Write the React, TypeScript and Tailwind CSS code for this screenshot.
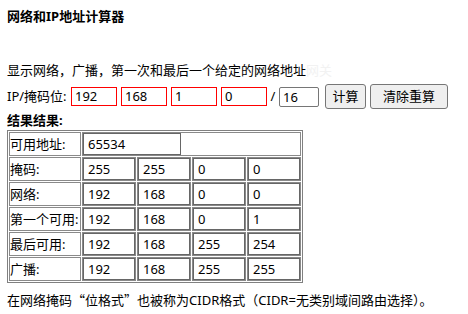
const ipParts = ["192", "168", "1", "0"];

const resultRows = [
  { label: "掩码:", values: ["255", "255", "0", "0"] },
  { label: "网络:", values: ["192", "168", "0", "0"] },
  { label: "第一个可用:", values: ["192", "168", "0", "1"] },
  { label: "最后可用:", values: ["192", "168", "255", "254"] },
  { label: "广播:", values: ["192", "168", "255", "255"] },
];

function Cell({ value }: { value: string }) {
  return (
    <td className="h-[24px] w-[54px] border border-[#8a8a8a] p-0">
      <input
        readOnly
        value={value}
        className="block h-[22px] w-[52px] border border-[#666666] bg-white pl-[4px] text-[13px] text-black outline-none"
      />
    </td>
  );
}

export default function App() {
  return (
    <div className="min-h-[314px] w-[468px] bg-white px-[7px] pt-[7px] font-['Noto_Sans','Noto_Sans_CJK_SC',sans-serif] text-[13px] text-black">
      <h1 className="text-[13px] font-bold leading-[18px]">网络和IP地址计算器</h1>

      <p className="mt-[36px] leading-[18px]">
        显示网络，广播，第一次和最后一个给定的网络地址
        <span className="text-[#f2f2f2]">网关</span>
      </p>

      <div className="mt-[5px] flex h-[25px] items-center">
        <span className="w-[64px] whitespace-nowrap">IP/掩码位:</span>
        {ipParts.map((part, i) => (
          <input
            key={i}
            readOnly
            value={part}
            className={
              i === 0
                ? "h-[19px] w-[46px] border border-[#ff0000] pl-[3px] text-[13px] outline-none"
                : "ml-[4px] h-[19px] w-[46px] border border-[#ff0000] pl-[3px] text-[13px] outline-none"
            }
          />
        ))}
        <span className="w-[12px] text-center">/</span>
        <input
          readOnly
          value="16"
          className="h-[20px] w-[40px] rounded-[2px] border border-[#767676] pl-[3px] text-[13px] outline-none"
        />
        <button
          type="button"
          className="ml-[6px] h-[25px] w-[41px] rounded-[3px] border border-[#767676] bg-[#efefef] text-[13px]"
        >
          计算
        </button>
        <button
          type="button"
          className="ml-[4px] h-[25px] w-[78px] rounded-[3px] border border-[#767676] bg-[#efefef] text-[13px]"
        >
          清除重算
        </button>
      </div>

      <p className="mt-[2px] font-bold leading-[18px]">结果结果:</p>

      <table className="mt-[1px] border-separate border-spacing-[1px] border border-[#808080]">
        <tbody>
          <tr>
            <td className="h-[24px] w-[72px] border border-[#8a8a8a] p-0 leading-[22px] whitespace-nowrap">
              可用地址:
            </td>
            <td colSpan={4} className="h-[24px] border border-[#8a8a8a] p-0">
              <input
                readOnly
                value="65534"
                className="block h-[22px] w-[98px] border border-[#666666] bg-white pl-[4px] text-[13px] outline-none"
              />
            </td>
          </tr>
          {resultRows.map((row) => (
            <tr key={row.label}>
              <td className="h-[24px] w-[72px] border border-[#8a8a8a] p-0 leading-[22px] whitespace-nowrap">
                {row.label}
              </td>
              {row.values.map((v, i) => (
                <Cell key={i} value={v} />
              ))}
            </tr>
          ))}
        </tbody>
      </table>

      <p className="mt-[8px] leading-[18px] whitespace-nowrap">
        在网络掩码<span className="font-['Noto_Sans_CJK_SC',sans-serif]">“</span>位格式
        <span className="font-['Noto_Sans_CJK_SC',sans-serif]">”</span>也被称为CIDR格式（CIDR=无类别域间路由选择）。
      </p>
    </div>
  );
}
